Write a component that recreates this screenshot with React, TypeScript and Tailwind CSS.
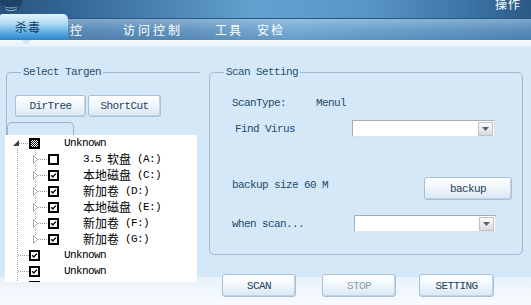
import React from "react";

const LAT = "font-['Liberation_Mono',monospace] text-[11px] tracking-[-0.6px] leading-[14px] whitespace-pre";
const CN = "font-['Noto_Sans_CJK_SC',sans-serif] text-[12px] leading-[14px] whitespace-pre";

type Seg = { t: string; cn?: boolean };

function Label({ segs, className = "" }: { segs: Seg[]; className?: string }) {
  return (
    <span className={`flex items-center ${className}`}>
      {segs.map((s, i) => (
        <span key={i} className={s.cn ? CN : LAT}>
          {s.t}
        </span>
      ))}
    </span>
  );
}

function Check({ state }: { state: "on" | "off" | "mixed" }) {
  return (
    <svg width="11" height="11" viewBox="0 0 11 11" className="block shrink-0">
      <defs>
        <pattern id="dither" width="2" height="2" patternUnits="userSpaceOnUse">
          <rect width="2" height="2" fill="#fff" />
          <rect width="1" height="1" fill="#111" />
          <rect x="1" y="1" width="1" height="1" fill="#111" />
        </pattern>
      </defs>
      <rect x="1" y="1" width="9" height="9" fill="#fff" stroke="#000" strokeWidth="2" />
      {state === "mixed" && <rect x="2" y="2" width="7" height="7" fill="url(#dither)" />}
      {state === "on" && (
        <path d="M3.2 5.3 L4.8 7 L7.9 3.6" fill="none" stroke="#000" strokeWidth="1.4" />
      )}
    </svg>
  );
}

function RootArrow() {
  return (
    <svg width="6" height="6" viewBox="0 0 6 6" className="block shrink-0">
      <polygon points="6,0 6,6 0,6" fill="#3c3c3c" />
    </svg>
  );
}

function ChildArrow() {
  return (
    <svg width="5" height="9" viewBox="0 0 5 9" className="block shrink-0 bg-white">
      <polygon points="0.5,0.5 4.5,4.5 0.5,8.5" fill="#fff" stroke="#a8a8a8" />
    </svg>
  );
}

function Btn({ w, h = 22, children, dim }: { w: number; h?: number; children: React.ReactNode; dim?: boolean }) {
  return (
    <div
      style={{ width: w, height: h }}
      className={`shrink-0 flex items-center justify-center rounded-[3px] border border-[#a9bfd3] bg-[linear-gradient(to_bottom,#ffffff,#f1f7fc_45%,#d7e7f4)] shadow-[inset_-1px_-1px_0_#c3d5e5] ${LAT} ${dim ? "text-[#8d9aa7]" : "text-[#1f3e5b]"}`}
    >
      {children}
    </div>
  );
}

function Select({ w }: { w: number }) {
  return (
    <div
      style={{ width: w }}
      className="h-[17px] shrink-0 bg-white border border-[#a4adb8] border-r-[#dde3ea] border-b-[#dde3ea] flex items-center justify-end pr-px"
    >
      <div className="w-[15px] h-[14px] border border-[#c0c4c8] bg-[linear-gradient(to_bottom,#fbfbfb,#dadada)] flex items-center justify-center">
        <svg width="7" height="4" viewBox="0 0 7 4">
          <polygon points="0,0 7,0 3.5,4" fill="#5f6266" />
        </svg>
      </div>
    </div>
  );
}

const children: Seg[][] = [
  [{ t: "3.5 " }, { t: "软盘", cn: true }, { t: " (A:)" }],
  [{ t: "本地磁盘", cn: true }, { t: " (C:)" }],
  [{ t: "新加卷", cn: true }, { t: " (D:)" }],
  [{ t: "本地磁盘", cn: true }, { t: " (E:)" }],
  [{ t: "新加卷", cn: true }, { t: " (F:)" }],
  [{ t: "新加卷", cn: true }, { t: " (G:)" }],
];

function TreeLines() {
  const d = "1 1";
  const c = "#9c9c9c";
  return (
    <svg className="absolute left-0 top-0 pointer-events-none" width="192" height="160">
      <line x1="12.5" y1="13" x2="12.5" y2="160" stroke={c} strokeDasharray={d} />
      <line x1="14" y1="8.5" x2="24" y2="8.5" stroke={c} strokeDasharray={d} />
      <line x1="30.5" y1="13" x2="30.5" y2="104" stroke={c} strokeDasharray={d} />
      {[0, 1, 2, 3, 4, 5].map((k) => (
        <line key={k} x1="33" y1={24.5 + 16 * k} x2="43" y2={24.5 + 16 * k} stroke={c} strokeDasharray={d} />
      ))}
      {[120.5, 136.5].map((y) => (
        <line key={y} x1="13" y1={y} x2="24" y2={y} stroke={c} strokeDasharray={d} />
      ))}
    </svg>
  );
}

function Tree() {
  return (
    <div className="-ml-[2px] w-[192px] h-[147px] bg-white relative overflow-hidden">
      <TreeLines />
      <div className="relative flex flex-col text-black">
        <div className="h-[16px] flex items-center">
          <div className="w-[8px] shrink-0" />
          <RootArrow />
          <div className="w-[10px] shrink-0" />
          <Check state="mixed" />
          <div className="w-[24px] shrink-0" />
          <span className={LAT}>Unknown</span>
        </div>
        {children.map((segs, i) => (
          <div key={i} className="h-[16px] flex items-center">
            <div className="w-[28px] shrink-0" />
            <ChildArrow />
            <div className="w-[10px] shrink-0" />
            <Check state={i === 0 ? "off" : "on"} />
            <div className="w-[24px] shrink-0" />
            <Label segs={segs} />
          </div>
        ))}
        {[0, 1].map((i) => (
          <div key={i} className="h-[16px] flex items-center">
            <div className="w-[24px] shrink-0" />
            <Check state="on" />
            <div className="w-[24px] shrink-0" />
            <span className={LAT}>Unknown</span>
          </div>
        ))}
        <div className="h-[16px] flex items-start pt-[2px]">
          <div className="w-[24px] shrink-0" />
          <Check state="on" />
        </div>
      </div>
    </div>
  );
}

function Logo() {
  return (
    <svg width="24" height="14" viewBox="0 0 24 14" className="block">
      <circle cx="11" cy="1" r="11" fill="#1d4268" />
      <path d="M2 6 Q11 11 20 6 Q11 9 2 6 Z" fill="#a9d3f0" opacity="0.8" />
      <path d="M5 9 Q11 12.5 17 9" fill="none" stroke="#dff0fb" strokeWidth="1" opacity="0.7" />
    </svg>
  );
}

export default function App() {
  return (
    <div className="w-[531px] h-[305px] overflow-hidden flex flex-col bg-[#d5e8f8] select-none">
      {/* top bar */}
      <div className="h-[18px] shrink-0 flex justify-between items-start bg-[linear-gradient(to_right,#27547e,#35699a_15%,#62a1cf_48%,#5a97c7_68%,#3c74a6_88%,#2b5a86)]">
        <Logo />
        <span className={`${CN} text-white -mt-[3px] mr-[10px] tracking-[1px]`}>操作</span>
      </div>
      {/* nav bar */}
      <div className="h-[22px] shrink-0 flex items-center border-t border-[#2b5882] bg-[linear-gradient(to_bottom,rgba(255,255,255,0.28),rgba(255,255,255,0.08)_45%,rgba(0,0,0,0.06)),linear-gradient(to_right,#4b7cab,#5b90bf_35%,#6ea7d3_55%,#5d96c6_80%,#4f86b8)]">
        <div className="relative self-end h-[26px] w-[68px] shrink-0 rounded-tr-[5px] rounded-tl-[2px] bg-[linear-gradient(to_bottom,#e4f3fc,#b4dcf4_35%,#5eaee3_70%,#2a85ca)] flex items-start pt-[6px] pl-[15px]">
          <span className={`${CN} text-[#143e66] tracking-[1px]`}>杀毒</span>
          <svg width="10" height="5" viewBox="0 0 10 5" className="absolute left-[21px] top-[26px]">
            <polygon points="0,0 10,0 5,5" fill="#cfe8f8" />
          </svg>
        </div>
        <span className={`${CN} text-white ml-[2px]`}>控</span>
        <span className={`${CN} text-white ml-[41px] tracking-[3px]`}>访问控制</span>
        <span className={`${CN} text-white ml-[32px] tracking-[2px]`}>工具</span>
        <span className={`${CN} text-white ml-[14px] tracking-[2px]`}>安检</span>
      </div>
      <div className="h-[7px] shrink-0 bg-[linear-gradient(to_bottom,#f5fafe,#e4f0fa)]" />
      {/* body */}
      <div className="flex-1 flex bg-[linear-gradient(to_bottom,#d5e8f8_230px,#e8f2fa_230px,#f8fbfe)]">
        {/* left column */}
        <div className="w-[200px] shrink-0 pl-[6px] pt-[18px]">
          <fieldset className="w-[194px] min-w-0 border-l border-t border-[#a3b7cb] rounded-tl-[5px]">
            <legend className={`ml-[14px] px-[2px] ${LAT} leading-[12px] text-[#27506e]`}>Select Targen</legend>
            <div className="flex mt-[16px] ml-[8px] gap-[2px]">
              <Btn w={71}>DirTree</Btn>
              <Btn w={73}>ShortCut</Btn>
            </div>
            <div className="mt-[5px] w-[67px] h-[13px] border border-b-0 border-[#a0b4c8] rounded-t-[5px]" />
            <Tree />
          </fieldset>
        </div>
        {/* right column */}
        <div className="flex-1 pl-[9px] pt-[18px]">
          <fieldset className="w-[314px] min-w-0 border border-[#a3b7cb] rounded-[5px] pb-[22px] text-[#1f4a68]">
            <legend className={`ml-[14px] px-[2px] ${LAT} leading-[12px] text-[#27506e]`}>Scan Setting</legend>
            <div className="mt-[16px] h-[16px] flex items-center pl-[22px]">
              <span className={`${LAT} w-[84px]`}>ScanType:</span>
              <span className={LAT}>Menul</span>
            </div>
            <div className="mt-[9px] h-[17px] flex items-center pl-[25px]">
              <span className={`${LAT} w-[117px]`}>Find Virus</span>
              <Select w={143} />
            </div>
            <div className="mt-[40px] h-[23px] flex items-start pl-[22px]">
              <span className={`${LAT} w-[192px] pt-[1px]`}>backup size 60 M</span>
              <Btn w={88} h={23}>backup</Btn>
            </div>
            <div className="mt-[15px] h-[17px] flex items-center pl-[22px]">
              <span className={`${LAT} w-[122px]`}>when scan...</span>
              <Select w={142} />
            </div>
          </fieldset>
          <div className="mt-[19px] flex pl-[13px]">
            <Btn w={74} h={23}>SCAN</Btn>
            <div className="w-[26px] shrink-0" />
            <Btn w={74} h={23} dim>STOP</Btn>
            <div className="w-[23px] shrink-0" />
            <Btn w={75} h={23}>SETTING</Btn>
          </div>
        </div>
      </div>
    </div>
  );
}
